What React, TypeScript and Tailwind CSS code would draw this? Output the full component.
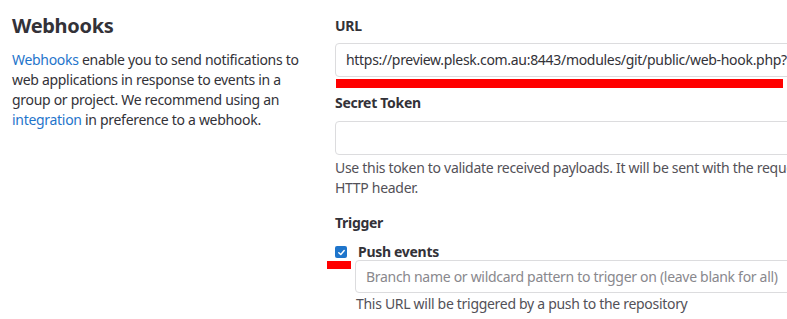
import React from "react";

export default function App() {
  return (
    <div className="w-[787px] h-[319px] overflow-hidden bg-white text-[#333238] font-['Noto_Sans',sans-serif] text-[14px] leading-[20px] tracking-[-0.3px] flex">
      <div className="w-[335px] shrink-0 pl-3 pt-[12px]">
        <h2 className="text-[20px] leading-[28px] font-bold text-[#333238]">Webhooks</h2>
        <p className="mt-[10px] w-[300px] text-[#333238]">
          <a className="text-[#1f75cb]">Webhooks</a> enable you to send notifications to web applications in response to events in a group or project. We recommend using an{" "}
          <a className="text-[#1f75cb]">integration</a> in preference to a webhook.
        </p>
      </div>
      <div className="flex-1 min-w-0 pt-4 flex flex-col">
        <label className="font-bold">URL</label>
        <div className="mt-[7px] w-[480px] h-[34px] border border-[#dcdcde] rounded-[4px] flex items-center px-[10px] whitespace-nowrap overflow-hidden">
          https://preview.plesk.com.au:8443/modules/git/public/web-hook.php?url=
        </div>
        <div className="mt-[2px] ml-px w-[447px] h-[9px] bg-[#ff0000]" />
        <label className="mt-[5px] font-bold">Secret Token</label>
        <div className="mt-[8px] w-[480px] h-[34px] border border-[#dcdcde] rounded-[4px]" />
        <div className="mt-[3px] w-[480px] text-[#535158] whitespace-nowrap">
          Use this token to validate received payloads. It will be sent with the request in the X-Gitlab-Token
          <br />
          HTTP header.
        </div>
        <label className="mt-[15px] font-bold">Trigger</label>
        <div className="mt-[13px] flex items-center">
          <span className="w-[12px] h-[12px] rounded-[2px] bg-[#1f75cb] flex items-center justify-center">
            <svg width="9" height="9" viewBox="0 0 10 10" fill="none">
              <path d="M2 5.2 L4.2 7.3 L8 2.8" stroke="white" strokeWidth="1.6" strokeLinecap="round" strokeLinejoin="round" />
            </svg>
          </span>
          <span className="ml-[11px] font-bold leading-[12px]">Push events</span>
        </div>
        <div className="flex mt-[3px] -ml-[8px]">
          <div className="w-[24px] h-[8px] bg-[#ff0000] shrink-0" />
          <div className="ml-[4px] flex flex-col">
            <div className="-mt-[1px] w-[460px] h-[33px] border border-[#dcdcde] rounded-[4px] flex items-center px-[10px] text-[#89888d] whitespace-nowrap">
              Branch name or wildcard pattern to trigger on (leave blank for all)
            </div>
            <div className="mt-[1px] ml-px text-[#535158] whitespace-nowrap">This URL will be triggered by a push to the repository</div>
          </div>
        </div>
      </div>
    </div>
  );
}
